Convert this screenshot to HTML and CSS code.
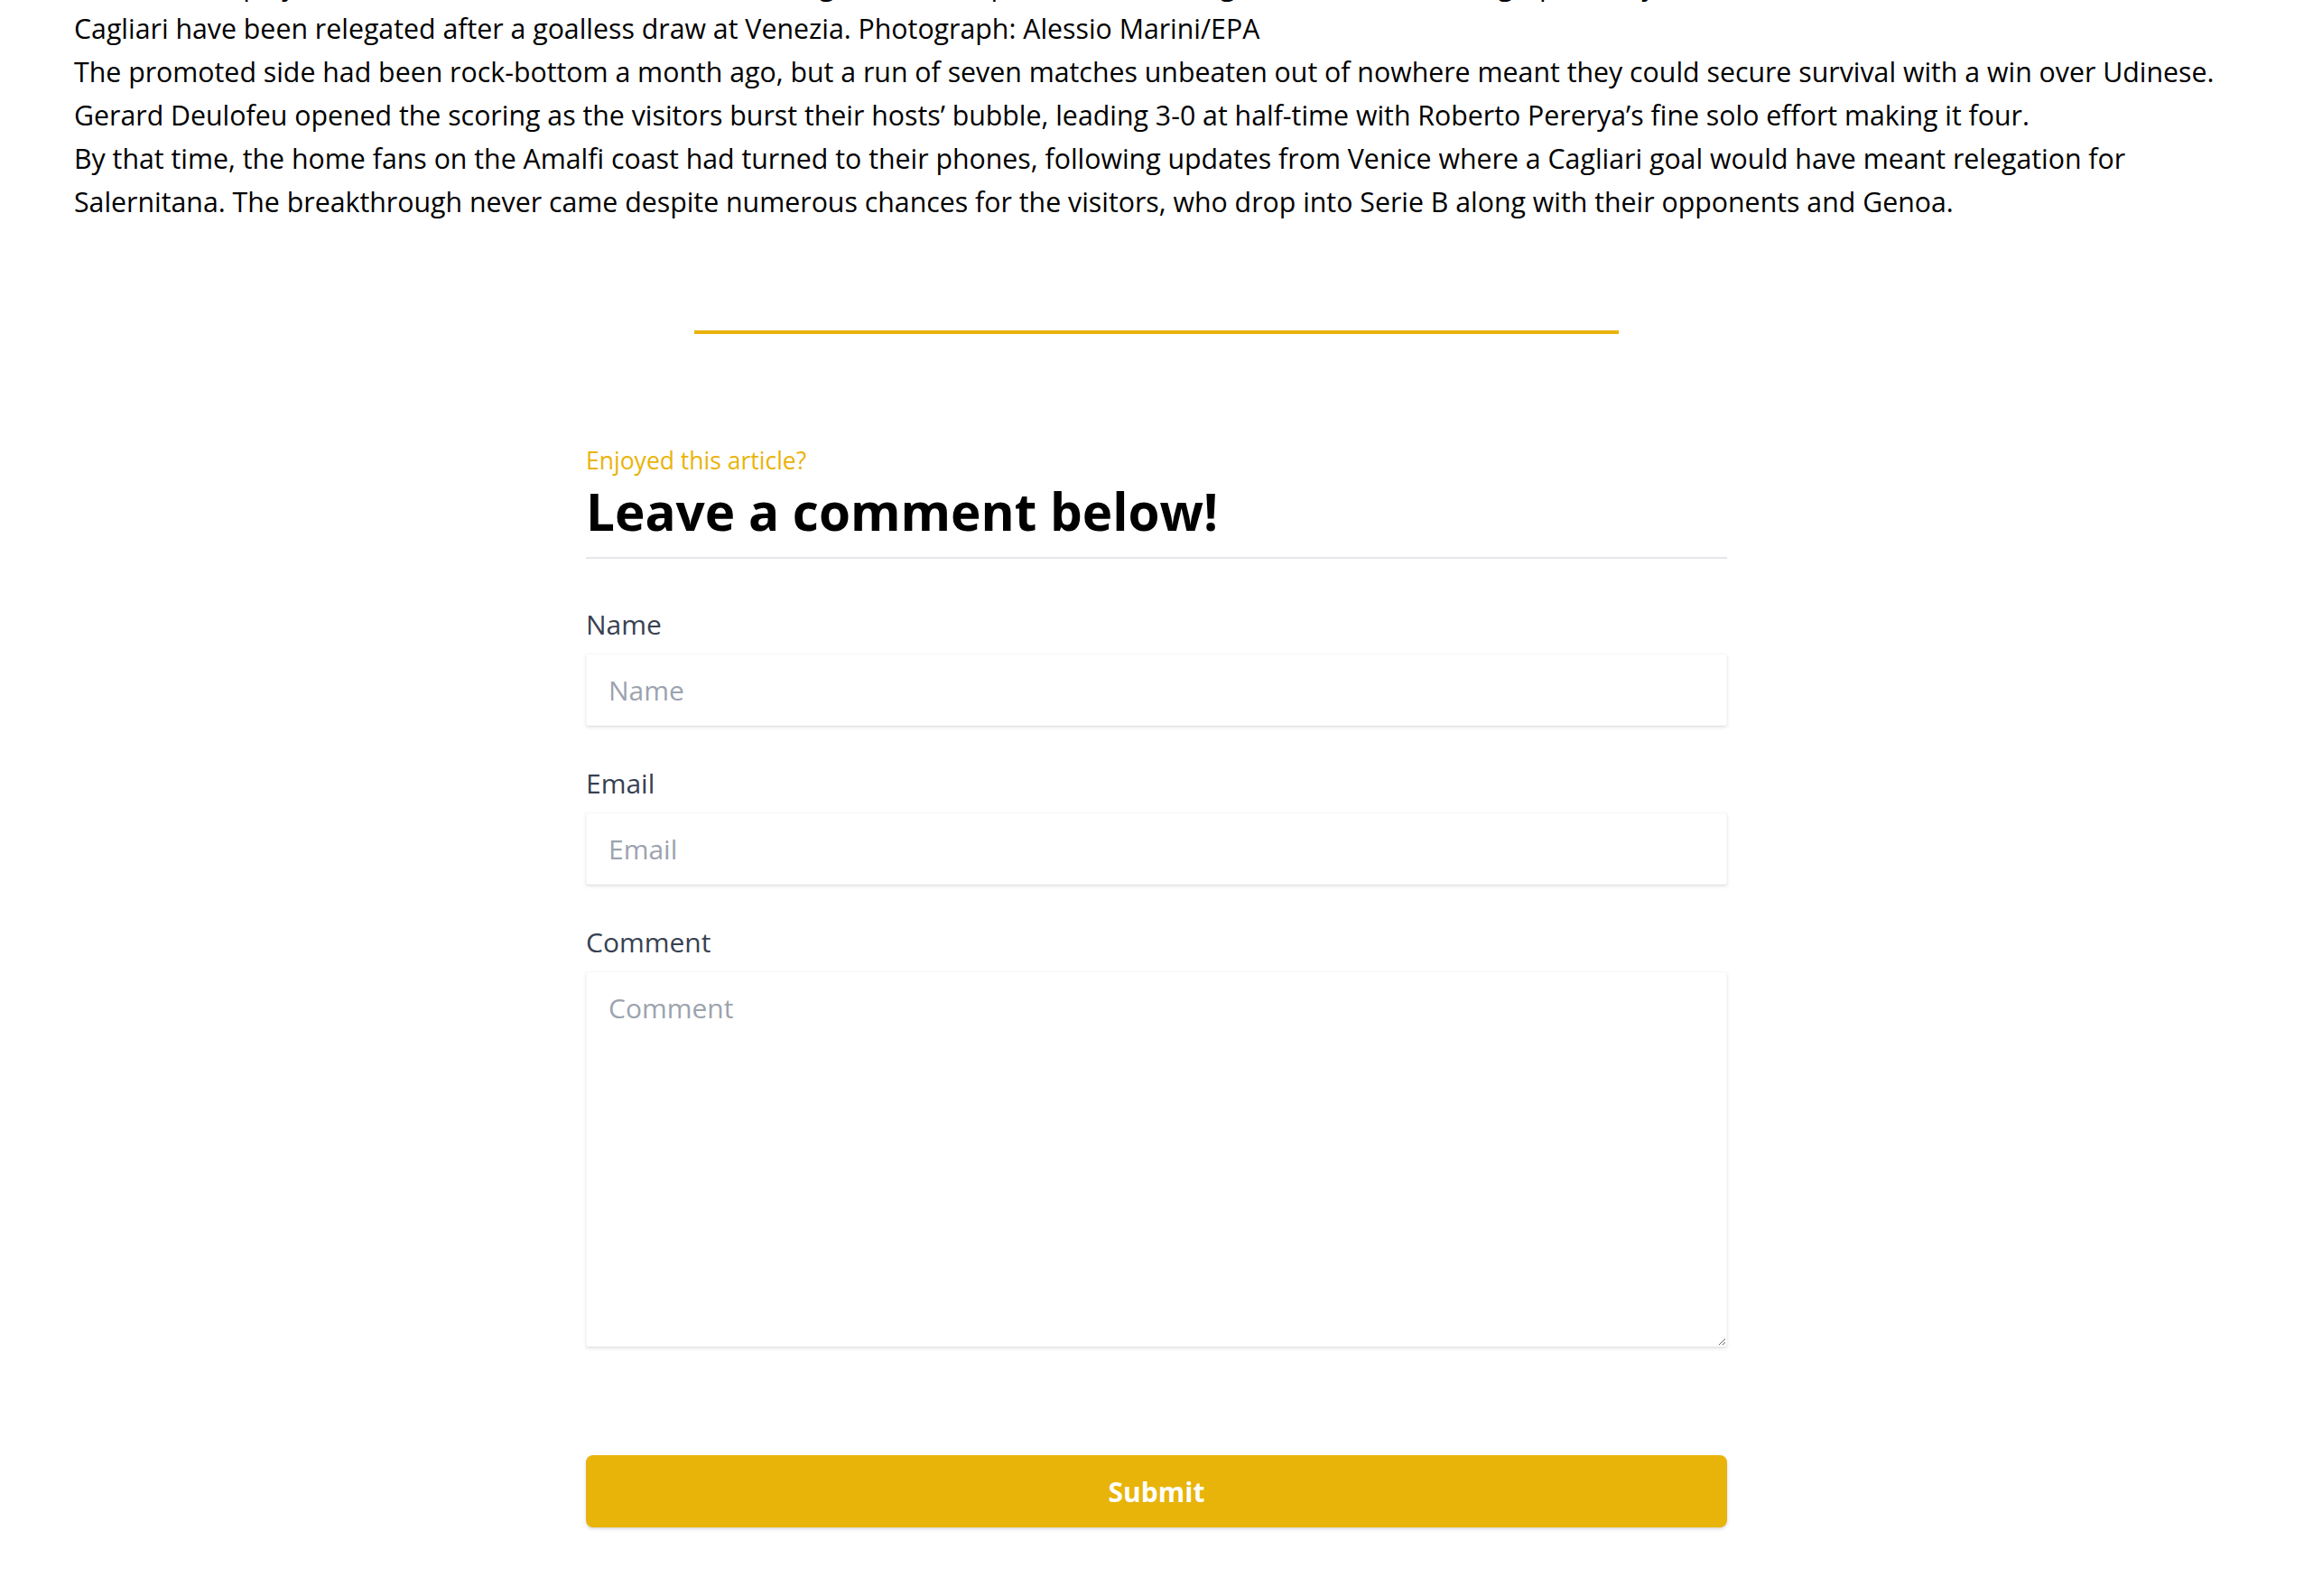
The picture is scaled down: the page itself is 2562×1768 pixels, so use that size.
FILE: index.html
```html
<!DOCTYPE html>
<html lang="en">
<head>
<meta charset="utf-8">
<title>Article</title>
<link rel="stylesheet" href="styles.css">
</head>
<body>
<article class="article">
  <p class="caption">Salernitana’s players celebrate with their fans after securing survival despite a 4-0 defeat against Udinese. Photograph: Getty</p>
  <p class="caption">Cagliari have been relegated after a goalless draw at Venezia. Photograph: Alessio Marini/EPA</p>
  <p>The promoted side had been rock-bottom a month ago, but a run of seven matches unbeaten out of nowhere meant they could secure survival with a win over Udinese.</p>
  <p>Gerard Deulofeu opened the scoring as the visitors burst their hosts’ bubble, leading 3-0 at half-time with Roberto Pererya’s fine solo effort making it four.</p>
  <p>By that time, the home fans on the Amalfi coast had turned to their phones, following updates from Venice where a Cagliari goal would have meant relegation for Salernitana. The breakthrough never came despite numerous chances for the visitors, who drop into Serie B along with their opponents and Genoa.</p>
</article>

<hr class="divider">

<section class="comments">
  <p class="eyebrow">Enjoyed this article?</p>
  <h2 class="title">Leave a comment below!</h2>
  <form class="form">
    <div class="field">
      <label class="label" for="name">Name</label>
      <input class="input" id="name" type="text" placeholder="Name">
    </div>
    <div class="field">
      <label class="label" for="email">Email</label>
      <input class="input" id="email" type="email" placeholder="Email">
    </div>
    <div class="field">
      <label class="label" for="comment">Comment</label>
      <textarea class="input textarea" id="comment" placeholder="Comment"></textarea>
    </div>
    <button class="submit" type="button">Submit</button>
  </form>
</section>
</body>
</html>
```

FILE: styles.css
```css
* { box-sizing: border-box; }

html, body {
  margin: 0;
  padding: 0;
  background: #ffffff;
}

body {
  font-family: "Open Sans", "Noto Sans", sans-serif;
  color: #000000;
}

.article {
  margin-top: -40px;
  padding: 0 82px;
  font-size: 30.3px;
  line-height: 48px;
}

.article p {
  margin: 0;
}

.divider {
  width: 1024px;
  height: 4px;
  margin: 118px auto 0;
  border: 0;
  background: #eab308;
}

.comments {
  width: 1264px;
  margin: 0 auto;
  padding-top: 122px;
  padding-bottom: 76px;
}

.eyebrow {
  margin: 0;
  font-size: 26.5px;
  line-height: 36px;
  color: #eab308;
}

.title {
  margin: 0;
  padding-bottom: 11px;
  border-bottom: 2px solid #e5e7eb;
  font-size: 56.6px;
  line-height: 78px;
  font-weight: 700;
  color: #000000;
}

.form {
  display: flex;
  flex-direction: column;
  padding-top: 55px;
}

.field {
  display: flex;
  flex-direction: column;
  gap: 14px;
  margin-bottom: 46px;
}

.field:last-of-type {
  margin-bottom: 120px;
}

.label {
  font-size: 30px;
  line-height: 36px;
  color: #374151;
}

.input {
  display: block;
  width: 100%;
  height: 80px;
  padding: 0 24px;
  border: 1px solid #f8f8f9;
  border-radius: 2px;
  background: #ffffff;
  box-shadow: 0 2px 4px rgba(0, 0, 0, 0.09), 0 1px 2px rgba(0, 0, 0, 0.05);
  font-family: inherit;
  font-size: 30px;
  color: #111827;
  outline: none;
}

.input::placeholder {
  color: #9ca3af;
}

.textarea {
  height: 416px;
  padding: 20px 24px;
  line-height: 40px;
  resize: vertical;
}

.submit {
  display: block;
  width: 100%;
  height: 80px;
  border: 0;
  border-radius: 8px;
  background: #e8b40a;
  box-shadow: 0 2px 4px rgba(0, 0, 0, 0.12), 0 1px 2px rgba(0, 0, 0, 0.06);
  font-family: inherit;
  font-size: 30px;
  font-weight: 700;
  color: #ffffff;
  cursor: pointer;
}
```
